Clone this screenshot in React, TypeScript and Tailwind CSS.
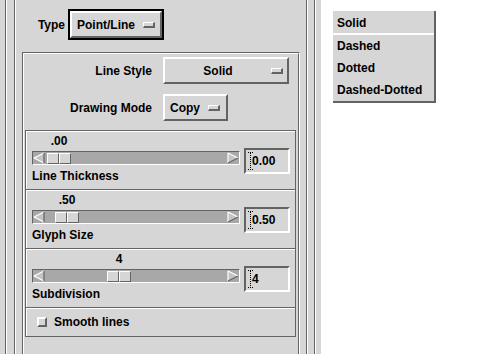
import type { ReactNode } from "react";

function Etched({ outer, inner, children }: { outer: string; inner: string; children?: ReactNode }) {
  return (
    <div className={`border border-t-[#636363] border-l-[#636363] border-b-white border-r-white ${outer}`}>
      <div className={`h-full border border-t-white border-l-white border-b-[#636363] border-r-[#636363] ${inner}`}>
        {children}
      </div>
    </div>
  );
}

function Indicator() {
  return (
    <span className="block w-[12px] h-[6px] bg-[#d6d6d6] border-t border-l border-b-2 border-r-2 border-t-white border-l-white border-b-[#636363] border-r-[#636363]" />
  );
}

function ArrowLeft() {
  return (
    <svg width="12" height="12" viewBox="0 0 12 12" className="shrink-0">
      <polygon points="1,6 11,1 11,11" fill="#c4c4c4" />
      <path d="M1 6 L11 1" stroke="#fff" strokeWidth="1.2" />
      <path d="M1 6 L11 11" stroke="#fff" strokeWidth="1.2" />
      <path d="M11 1 L11 11" stroke="#636363" strokeWidth="1.2" />
    </svg>
  );
}

function ArrowRight() {
  return (
    <svg width="12" height="12" viewBox="0 0 12 12" className="shrink-0">
      <polygon points="1,1 11,6 1,11" fill="#c4c4c4" />
      <path d="M1 1 L11 6 M1 1 L1 11" stroke="#fff" strokeWidth="1.2" />
      <path d="M1 11 L11 6" stroke="#636363" strokeWidth="1.2" />
    </svg>
  );
}

function Cursor() {
  return (
    <svg width="5" height="18" viewBox="0 0 5 18" className="shrink-0 -mr-[1px]">
      <path d="M0 0.5h5M2.5 1v16M0 17.5h5" stroke="#000" strokeWidth="1" strokeDasharray="1 1" fill="none" />
    </svg>
  );
}

interface SliderProps {
  value: string;
  name: string;
  field: string;
  labelMl: string;
  thumbMl: string;
}

function SliderGroup({ value, name, field, labelMl, thumbMl }: SliderProps) {
  return (
    <div className="h-[59px] flex items-start border-t border-l border-r border-[#636363] shadow-[inset_1px_1px_0_#fff]">
      <div className="pl-[6px] pt-[3px] flex flex-col">
        <div className="h-[14px] flex">
          <span className={`${labelMl} w-[24px] text-center`}>{value}</span>
        </div>
        {/* scale trough */}
        <div className="mt-[3px] w-[208px] h-[14px] flex items-center bg-[#a8a8a8] border border-t-[#636363] border-l-[#636363] border-b-white border-r-white">
          <ArrowLeft />
          <div className={`${thumbMl} flex h-[11px]`}>
            <span className="w-[12px] h-full bg-[#d6d6d6] border border-t-white border-l-white border-b-[#636363] border-r-[#636363]" />
            <span className="w-[12px] h-full bg-[#d6d6d6] border border-t-white border-l-white border-b-[#636363] border-r-[#636363]" />
          </div>
          <div className="flex-1" />
          <ArrowRight />
        </div>
        <div className="mt-[4px] h-[14px]">{name}</div>
      </div>
      <div className="mt-[17px] ml-[4px] w-[46px] h-[26px] flex items-center pl-[2px] border-2 border-t-[#636363] border-l-[#636363] border-b-white border-r-white">
        <Cursor />
        <span>{field}</span>
      </div>
    </div>
  );
}

export default function App() {
  return (
    <div className="w-[500px] h-[354px] overflow-hidden bg-white flex font-['Liberation_Sans',Arial,sans-serif] font-bold text-[12px] leading-[14px] text-black">
      {/* dialog panel */}
      <div className="w-[321px] h-full shrink-0 bg-[#d6d6d6] pl-[5px]">
        <Etched outer="w-[311px] h-[400px] -mt-[10px]" inner="pl-[7px] pt-[3px]">
          <Etched outer="w-[294px] h-[390px]" inner="flex flex-col">
            {/* Type row */}
            <div className="mt-[12px] h-[31px] flex items-center">
              <span className="w-[49px] text-right">Type</span>
              <div className="ml-[3px] w-[96px] h-[31px] border-2 border-black">
                <div className="h-full flex items-center justify-between pl-[5px] pr-[5px] border-2 border-t-white border-l-white border-b-[#636363] border-r-[#636363]">
                  <span>Point/Line</span>
                  <Indicator />
                </div>
              </div>
            </div>

            <Etched outer="ml-[6px] mt-[12px] w-[278px] h-[330px]" inner="flex flex-col">
              <div className="mt-[3px] h-[27px] flex items-center">
                <span className="w-[128px] text-right">Line Style</span>
                <div className="ml-[11px] w-[126px] h-[27px] flex items-center pl-[5px] pr-[4px] border-2 border-t-white border-l-white border-b-[#636363] border-r-[#636363]">
                  <span className="flex-1 text-center">Solid</span>
                  <span className="ml-[5px]">
                    <Indicator />
                  </span>
                </div>
              </div>

              <div className="mt-[10px] h-[27px] flex items-center">
                <span className="w-[128px] text-right">Drawing Mode</span>
                <div className="ml-[11px] w-[65px] h-[27px] flex items-center pl-[5px] border-2 border-t-white border-l-white border-b-[#636363] border-r-[#636363]">
                  <span>Copy</span>
                  <span className="ml-[8px]">
                    <Indicator />
                  </span>
                </div>
              </div>

              <div className="mt-[9px] ml-[1px] w-[271px] flex flex-col">
                <SliderGroup value=".00" name="Line Thickness" field="0.00" labelMl="ml-[15px]" thumbMl="ml-[2px]" />
                <SliderGroup value=".50" name="Glyph Size" field="0.50" labelMl="ml-[23px]" thumbMl="ml-[10px]" />
                <SliderGroup value="4" name="Subdivision" field="4" labelMl="ml-[75px]" thumbMl="ml-[62px]" />
                <div className="h-[30px] flex items-center pl-[11px] border border-[#636363] shadow-[inset_1px_1px_0_#fff]">
                  <span className="block w-[10px] h-[10px] bg-[#d6d6d6] border-2 border-t-white border-l-white border-b-[#636363] border-r-[#636363]" />
                  <span className="ml-[7px]">Smooth lines</span>
                </div>
              </div>
            </Etched>
          </Etched>
        </Etched>
      </div>

      {/* posted option menu */}
      <div className="pl-[12px] pt-[11px]">
        <div className="w-[103px] bg-[#d6d6d6] pt-[1px] border-r-2 border-b-2 border-[#636363] flex flex-col">
          <div className="h-[23px] flex items-center pl-[4px] border-b-2 border-white">Solid</div>
          <div className="h-[22px] flex items-center pl-[4px]">Dashed</div>
          <div className="h-[22px] flex items-center pl-[4px]">Dotted</div>
          <div className="h-[22px] flex items-center pl-[4px]">Dashed-Dotted</div>
        </div>
      </div>
    </div>
  );
}
